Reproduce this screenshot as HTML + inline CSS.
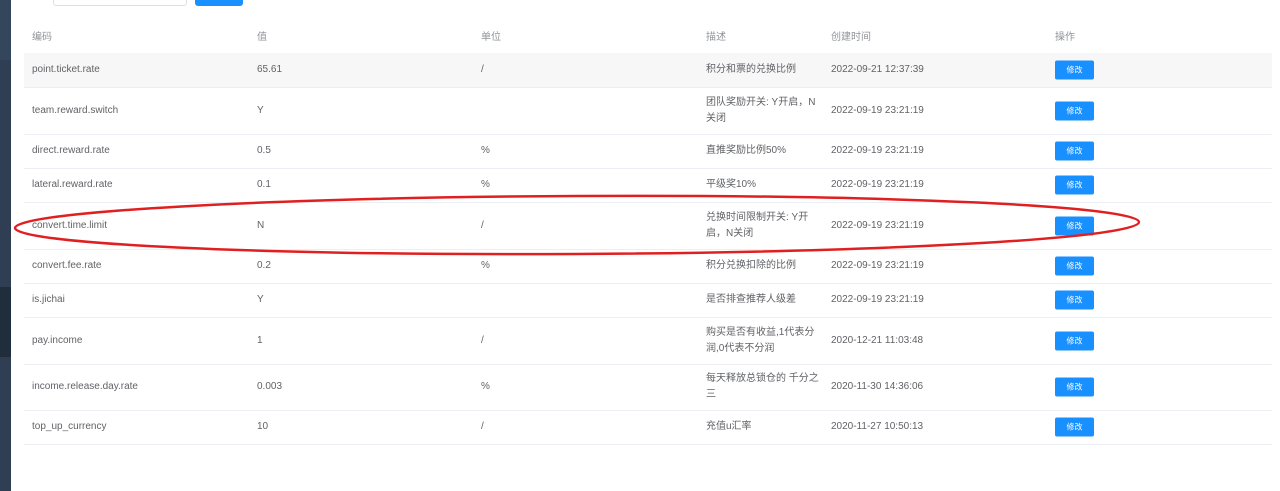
<!DOCTYPE html>
<html><head><meta charset="utf-8"><style>
*{margin:0;padding:0;box-sizing:border-box}
body{width:1280px;height:491px;overflow:hidden;background:#fff;font-family:"Liberation Sans","Noto Sans CJK SC",sans-serif;font-size:10px;color:#606266;position:relative}
.sb{position:absolute;left:0;top:0;width:11px;height:491px;background:#2f3e52}
.row{position:absolute;left:24px;width:1248px;border-bottom:1px solid #ebeef5}
.c{position:absolute;top:50%;transform:translateY(-50%);line-height:16px}
.btn{position:absolute;left:1031px;top:50%;transform:translateY(-50%);width:39px;height:19px;background:#1890ff;color:#fff;border-radius:2px;font-size:8px;text-align:center;line-height:19px}
.h{color:#909399}
</style></head><body>
<div class="sb"></div>
<div style="position:absolute;left:0;top:0;width:11px;height:60px;background:#34465c"></div>
<div style="position:absolute;left:0;top:287px;width:11px;height:70px;background:#1f2d3d"></div>
<div style="position:absolute;left:53px;top:-4px;width:134px;height:10px;border:1px solid #dcdfe6;border-radius:3px"></div>
<div style="position:absolute;left:195px;top:-4px;width:48px;height:10px;background:#1890ff;border-radius:3px"></div>

<div class="row h" style="top:22px;height:32px"><span class="c" style="left:8px">编码</span><span class="c" style="left:233px">值</span><span class="c" style="left:457px">单位</span><span class="c" style="left:682px">描述</span><span class="c" style="left:807px">创建时间</span><span class="c" style="left:1031px">操作</span></div>

<div class="row" style="top:53px;height:35px;background:#f7f7f7"><span class="c" style="left:8px">point.ticket.rate</span><span class="c" style="left:233px">65.61</span><span class="c" style="left:457px">/</span><span class="c" style="left:682px">积分和票的兑换比例</span><span class="c" style="left:807px">2022-09-21 12:37:39</span><span class="btn">修改</span></div>
<div class="row" style="top:87px;height:48px"><span class="c" style="left:8px">team.reward.switch</span><span class="c" style="left:233px">Y</span><span class="c" style="left:682px;width:115px">团队奖励开关: Y开启，N关闭</span><span class="c" style="left:807px">2022-09-19 23:21:19</span><span class="btn">修改</span></div>
<div class="row" style="top:134px;height:35px"><span class="c" style="left:8px">direct.reward.rate</span><span class="c" style="left:233px">0.5</span><span class="c" style="left:457px">%</span><span class="c" style="left:682px">直推奖励比例50%</span><span class="c" style="left:807px">2022-09-19 23:21:19</span><span class="btn">修改</span></div>
<div class="row" style="top:168px;height:35px"><span class="c" style="left:8px">lateral.reward.rate</span><span class="c" style="left:233px">0.1</span><span class="c" style="left:457px">%</span><span class="c" style="left:682px">平级奖10%</span><span class="c" style="left:807px">2022-09-19 23:21:19</span><span class="btn">修改</span></div>
<div class="row" style="top:202px;height:48px"><span class="c" style="left:8px">convert.time.limit</span><span class="c" style="left:233px">N</span><span class="c" style="left:457px">/</span><span class="c" style="left:682px;width:115px">兑换时间限制开关: Y开启，N关闭</span><span class="c" style="left:807px">2022-09-19 23:21:19</span><span class="btn">修改</span></div>
<div class="row" style="top:249px;height:35px"><span class="c" style="left:8px">convert.fee.rate</span><span class="c" style="left:233px">0.2</span><span class="c" style="left:457px">%</span><span class="c" style="left:682px">积分兑换扣除的比例</span><span class="c" style="left:807px">2022-09-19 23:21:19</span><span class="btn">修改</span></div>
<div class="row" style="top:283px;height:35px"><span class="c" style="left:8px">is.jichai</span><span class="c" style="left:233px">Y</span><span class="c" style="left:682px">是否排查推荐人级差</span><span class="c" style="left:807px">2022-09-19 23:21:19</span><span class="btn">修改</span></div>
<div class="row" style="top:317px;height:48px"><span class="c" style="left:8px">pay.income</span><span class="c" style="left:233px">1</span><span class="c" style="left:457px">/</span><span class="c" style="left:682px;width:115px">购买是否有收益,1代表分润,0代表不分润</span><span class="c" style="left:807px">2020-12-21 11:03:48</span><span class="btn">修改</span></div>
<div class="row" style="top:364px;height:47px"><span class="c" style="left:8px">income.release.day.rate</span><span class="c" style="left:233px">0.003</span><span class="c" style="left:457px">%</span><span class="c" style="left:682px;width:115px">每天释放总锁仓的 千分之三</span><span class="c" style="left:807px">2020-11-30 14:36:06</span><span class="btn">修改</span></div>
<div class="row" style="top:410px;height:35px"><span class="c" style="left:8px">top_up_currency</span><span class="c" style="left:233px">10</span><span class="c" style="left:457px">/</span><span class="c" style="left:682px">充值u汇率</span><span class="c" style="left:807px">2020-11-27 10:50:13</span><span class="btn">修改</span></div>

<svg style="position:absolute;left:0;top:0" width="1280" height="491"><ellipse cx="577" cy="225" rx="562" ry="29" transform="rotate(-0.3 577 225)" fill="none" stroke="#e02020" stroke-width="2.5"/></svg>
</body></html>
